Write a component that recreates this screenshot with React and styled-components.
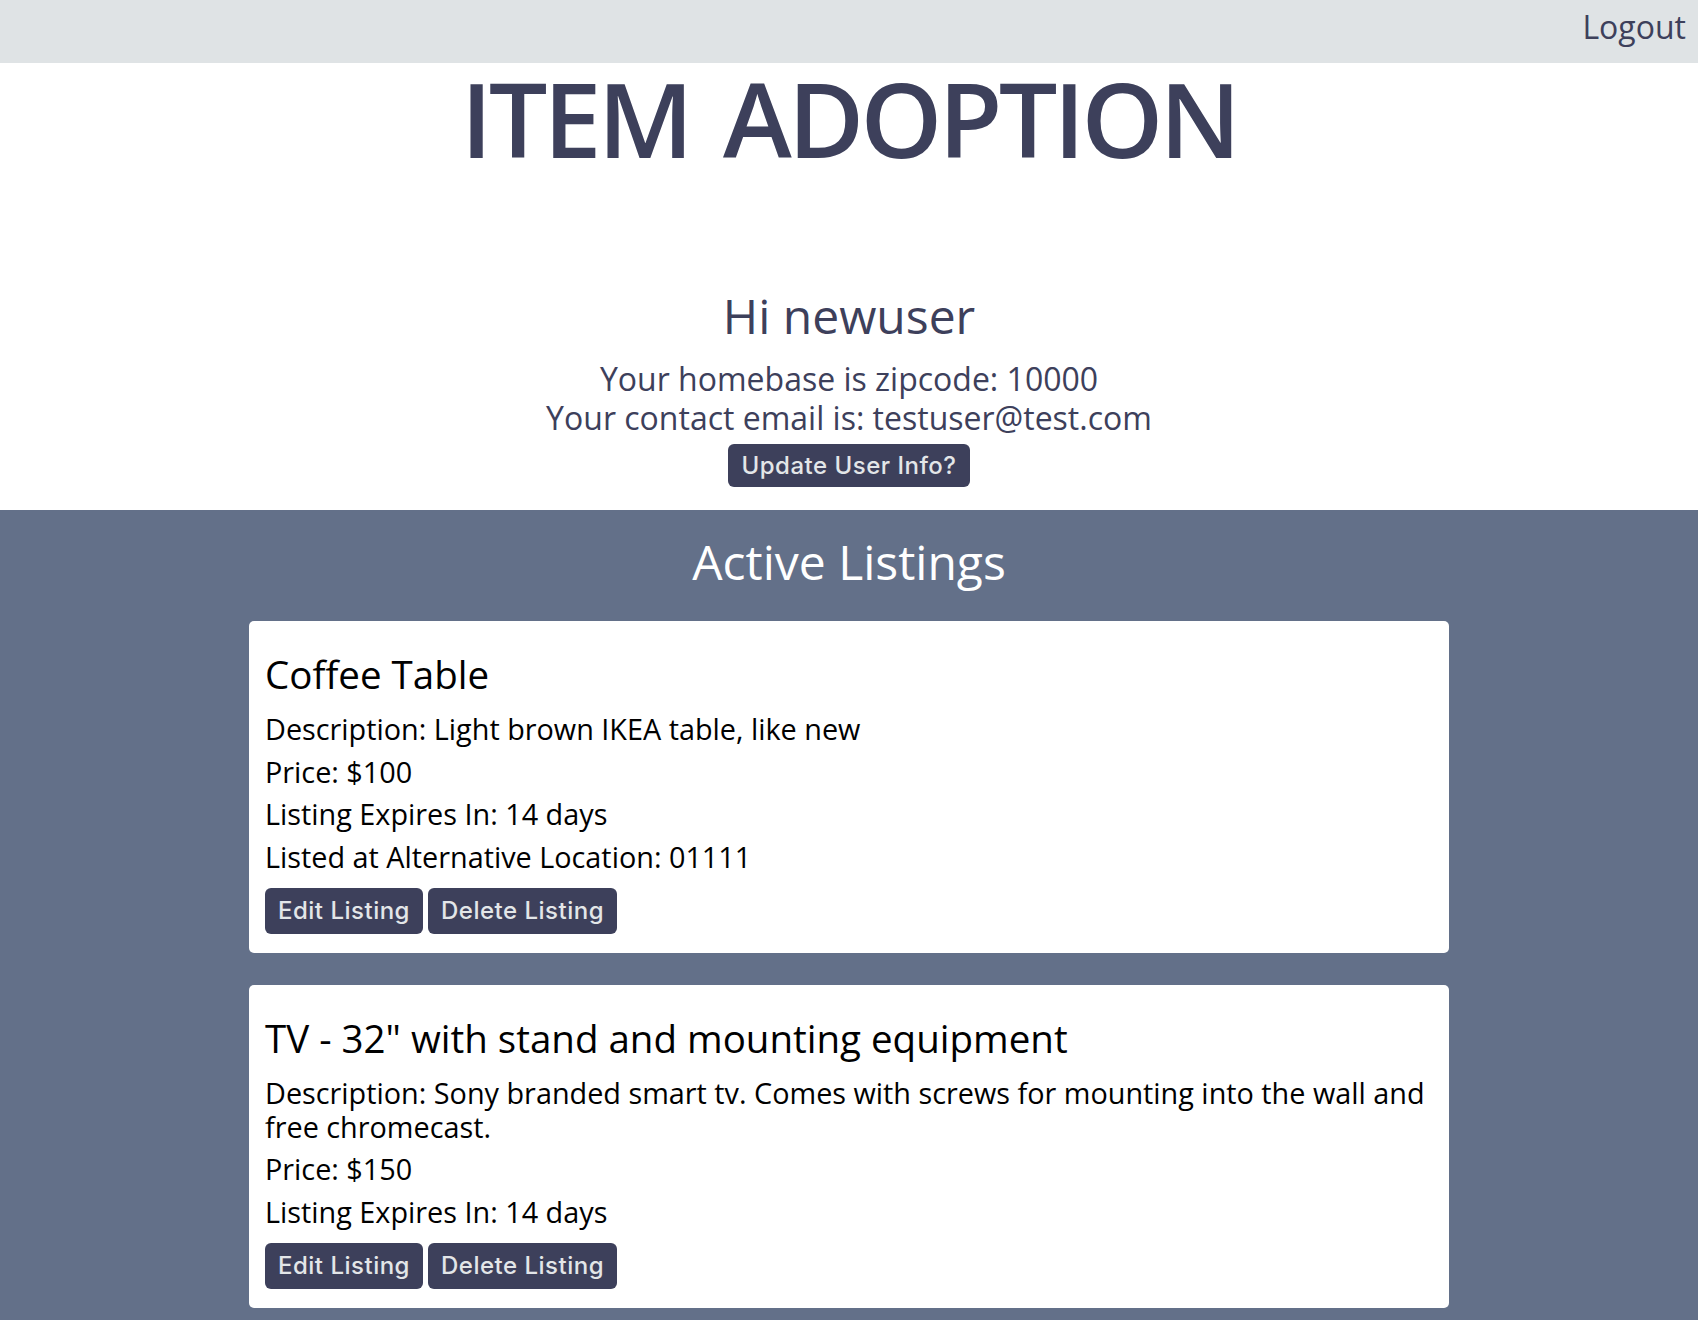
import React from 'react';
import styled, { createGlobalStyle } from 'styled-components';

const GlobalStyle = createGlobalStyle`
  html, body {
    margin: 0;
    padding: 0;
    background: #ffffff;
    font-family: 'Open Sans', 'Noto Sans', sans-serif;
  }
  * {
    box-sizing: border-box;
  }
`;

const NavBar = styled.nav`
  height: 63px;
  background: #dfe3e5;
  display: flex;
  justify-content: flex-end;
  align-items: center;
  padding: 0 12px 11px 0;
`;

const NavLink = styled.a`
  font-size: 32px;
  color: #3d405b;
  text-decoration: none;
  cursor: pointer;
`;

const Header = styled.header`
  text-align: center;
  color: #3d405b;
  padding: 3px 0 23px;
`;

const Title = styled.h1`
  margin: 0 0 117px;
  font-size: 104px;
  line-height: 104px;
  font-weight: 600;
  letter-spacing: -3.8px;
  word-spacing: 10px;
`;

const Greeting = styled.h2`
  margin: 0 0 14px;
  font-size: 48px;
  line-height: 58px;
  font-weight: 400;
`;

const InfoLine = styled.p`
  margin: 0;
  font-size: 32px;
  line-height: 39px;
`;

const Button = styled.button`
  font-family: Inter, Roboto, sans-serif;
  font-size: 24px;
  font-weight: 500;
  letter-spacing: 0.5px;
  color: #e3e6e8;
  background: #3d405b;
  border: none;
  border-radius: 6px;
  height: ${(p) => (p.$tall ? '46px' : '43px')};
  padding: 0 13px;
  cursor: pointer;
`;

const UpdateButton = styled(Button)`
  margin-top: 7px;
`;

const Listings = styled.section`
  background: #637089;
  padding: 23px 0 40px;
`;

const SectionTitle = styled.h2`
  margin: 0 0 30px;
  text-align: center;
  color: #ffffff;
  font-size: 48px;
  line-height: 58px;
  font-weight: 400;
`;

const CardList = styled.div`
  max-width: 1200px;
  margin: 0 auto;
  display: flex;
  flex-direction: column;
  gap: 32px;
`;

const Card = styled.article`
  background: #ffffff;
  border-radius: 5px;
  padding: 30px 16px 19px;
  color: #000000;
`;

const CardTitle = styled.h3`
  margin: 0 0 15px;
  font-size: 38.5px;
  line-height: 46px;
  font-weight: 400;
`;

const Detail = styled.p`
  margin: 0 0 8.5px;
  font-size: 28.8px;
  line-height: 34px;
`;

const Actions = styled.div`
  display: flex;
  gap: 5px;
  margin-top: 14px;
`;

const listings = [
  {
    id: 1,
    name: 'Coffee Table',
    description: 'Light brown IKEA table, like new',
    price: 100,
    expires: 14,
    location: '01111',
  },
  {
    id: 2,
    name: 'TV - 32" with stand and mounting equipment',
    description:
      'Sony branded smart tv. Comes with screws for mounting into the wall and free chromecast.',
    price: 150,
    expires: 14,
  },
];

const ListingCard = ({ item }) => (
  <Card>
    <CardTitle>{item.name}</CardTitle>
    <Detail>Description: {item.description}</Detail>
    <Detail>Price: ${item.price}</Detail>
    <Detail>Listing Expires In: {item.expires} days</Detail>
    {item.location && (
      <Detail>Listed at Alternative Location: {item.location}</Detail>
    )}
    <Actions>
      <Button $tall>Edit Listing</Button>
      <Button $tall>Delete Listing</Button>
    </Actions>
  </Card>
);

const App = () => (
  <>
    <GlobalStyle />
    <NavBar>
      <NavLink>Logout</NavLink>
    </NavBar>
    <Header>
      <Title>ITEM ADOPTION</Title>
      <Greeting>Hi newuser</Greeting>
      <InfoLine>Your homebase is zipcode: 10000</InfoLine>
      <InfoLine>Your contact email is: testuser@test.com</InfoLine>
      <UpdateButton>Update User Info?</UpdateButton>
    </Header>
    <Listings>
      <SectionTitle>Active Listings</SectionTitle>
      <CardList>
        {listings.map((item) => (
          <ListingCard key={item.id} item={item} />
        ))}
      </CardList>
    </Listings>
  </>
);

export default App;
